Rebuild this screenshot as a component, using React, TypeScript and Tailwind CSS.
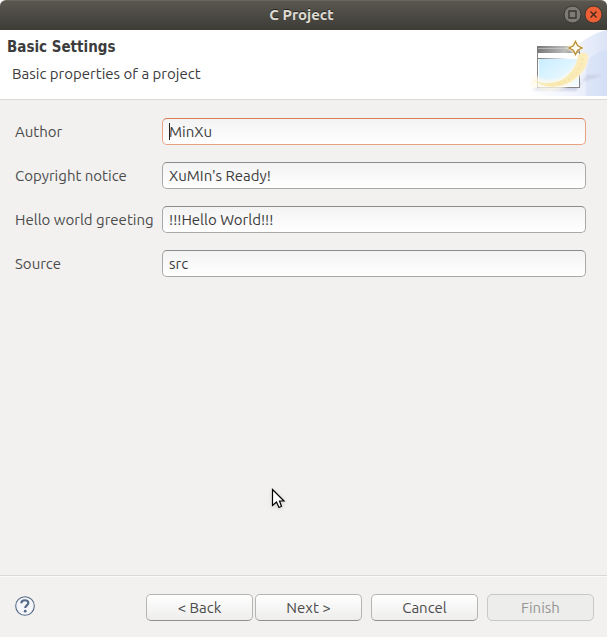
import React from "react";

type FieldProps = { id: string; label: string; value: string; active?: boolean };

function Field({ id, label, value, active = false }: FieldProps) {
  return (
    <>
      <label htmlFor={id} className="whitespace-nowrap">
        {label}
      </label>
      <div className="relative">
        <input
          id={id}
          type="text"
          defaultValue={value}
          className={`block h-[27px] w-full rounded-[5px] border bg-linear-to-b from-[#f3f3f3] to-white px-1.5 text-[#3c3c3c] outline-none ${
            active
              ? "border-[#e9a184] border-t-[#dc7b55]"
              : "border-[#a9a9a7] border-t-[#8b8b89]"
          }`}
        />
        {active && <span className="absolute top-[5px] left-[7px] h-[17px] w-px bg-[#222]" />}
      </div>
    </>
  );
}

function DialogButton({ children, disabled = false }: { children: React.ReactNode; disabled?: boolean }) {
  return (
    <button
      type="button"
      disabled={disabled}
      className={`h-[27px] w-[107px] rounded-[5px] border text-center leading-none ${
        disabled
          ? "border-[#c8c8c6] bg-[#ededec] text-[#979593]"
          : "border-[#b5b5b3] border-b-[#8f8f8d] bg-linear-to-b from-white to-[#eeedec] text-[#4c4c4c]"
      }`}
    >
      {children}
    </button>
  );
}

function WizardBanner() {
  return (
    <svg width="77" height="66" viewBox="0 0 77 66" aria-hidden="true">
      <defs>
        <linearGradient id="fade" x1="0" y1="0" x2="1" y2="0">
          <stop offset="0" stopColor="#fff" />
          <stop offset="0.55" stopColor="#f1f4fc" />
          <stop offset="1" stopColor="#dbe4f7" />
        </linearGradient>
        <linearGradient id="bar" x1="0" y1="0" x2="1" y2="0">
          <stop offset="0" stopColor="#777" />
          <stop offset="0.65" stopColor="#bcbcbc" />
          <stop offset="1" stopColor="#777" />
        </linearGradient>
        <linearGradient id="pane" x1="0" y1="0" x2="1" y2="1">
          <stop offset="0" stopColor="#c9edff" />
          <stop offset="1" stopColor="#f5fcff" />
        </linearGradient>
        <linearGradient id="rim" x1="0" y1="0" x2="1" y2="0">
          <stop offset="0" stopColor="#777" />
          <stop offset="1" stopColor="#fff" />
        </linearGradient>
        <linearGradient id="arc" x1="0" y1="0" x2="1" y2="0">
          <stop offset="0" stopColor="#f9e99c" stopOpacity="0.3" />
          <stop offset="0.35" stopColor="#f9e9ae" />
          <stop offset="1" stopColor="#fbedbd" />
        </linearGradient>
        <filter id="soft" x="-30%" y="-30%" width="160%" height="160%">
          <feGaussianBlur stdDeviation="1.1" />
        </filter>
      </defs>
      <path d="M0 66V56L40 22C50 12 62 3 77 0V66Z" fill="url(#fade)" />
      <path d="M56 31C62 25 70 21 77 20V66H56Z" fill="#c5d3f1" opacity="0.3" />
      <path d="M2 60L13 55H43L73 45L57 45L46 61Z" fill="#c6cbe2" opacity="0.75" filter="url(#soft)" />
      <rect x="7.5" y="16.5" width="42" height="41" fill="#fff" stroke="#858585" />
      <rect x="7" y="16" width="43" height="7" fill="url(#bar)" />
      <path d="M8 18.5H49" stroke="#d4d4d4" opacity="0.6" />
      <rect x="9" y="29" width="40" height="27" fill="url(#pane)" />
      <rect x="8" y="28" width="30" height="1" fill="url(#rim)" />
      <path d="M2 50C14 58 30 57 40 48C49 41 53 34 53 26" fill="none" stroke="#fffaea" strokeWidth="11" opacity="0.75" filter="url(#soft)" />
      <path d="M1 48C10 55 26 55 36 47C43 41 47 34 48 26C49 22 57 21 58 26C58 37 51 45 42 51C29 59 11 59 1 48Z" fill="url(#arc)" />
      <path d="M29 54C42 49 51 41 53 28" fill="none" stroke="#f0dd9f" strokeWidth="1.500" strokeDasharray="2 3" opacity="0.6" />
      <path d="M45.500 9Q47 14 54 18Q47 21 45.500 26Q43 21 36 18Q43 14 45.500 9Z" fill="#fff8d6" filter="url(#soft)" />
      <path d="M45.500 11.500L47.700 15.800L52 18L47.700 20.200L45.500 24.500L43.300 20.200L39 18L43.300 15.800Z" fill="#fffef5" stroke="#b88a32" strokeWidth="1.3" />
    </svg>
  );
}

export default function App() {
  return (
    <div className="bg-white">
      <main className="relative flex min-h-screen flex-col bg-[#f2f1f0] font-['Ubuntu','Noto_Sans',sans-serif] text-[15px] leading-5 text-[#4c4c4c]">
        <div className="bg-white">
          <header className="relative flex h-[30px] items-center justify-center rounded-t-[6px] border-t border-[#66645b] bg-linear-to-b from-[#59574f] to-[#3d3c37]">
            <h1 className="pr-1 pb-0.5 text-[15px] font-bold text-[#dfdbd2] [text-shadow:0_-1px_0_#262521]">C Project</h1>
            <div className="absolute top-1 right-1 flex gap-0.5">
              <button type="button" aria-label="Maximize">
                <svg width="19" height="19" viewBox="0 0 19 19">
                  <circle cx="9.500" cy="9.500" r="8.500" fill="#7d7b73" stroke="#36352f" />
                  <path d="M6 6H13V13H6Z" fill="none" stroke="#36352f" strokeWidth="1.4" />
                </svg>
              </button>
              <button type="button" aria-label="Close">
                <svg width="19" height="19" viewBox="0 0 19 19">
                  <circle cx="9.500" cy="9.500" r="8.500" fill="#ed6035" stroke="#393630" />
                  <path d="M6.500 6.500L12.500 12.500M12.500 6.500L6.500 12.500" stroke="#46291e" strokeWidth="1.4" />
                </svg>
              </button>
            </div>
          </header>
        </div>

        <section className="flex h-[70px] justify-between border-b border-[#d8d8d6] bg-white">
          <div className="pt-[7px] pl-[7px] text-[#3c3c3c]">
            <h2 className="font-['DejaVu_Sans_Condensed','Noto_Sans',sans-serif] text-[15px] font-bold">Basic Settings</h2>
            <p className="pt-[7px] pl-[5px]">Basic properties of a project</p>
          </div>
          <WizardBanner />
        </section>

        <form className="grid grow grid-cols-[137px_1fr] content-start items-center gap-x-2.5 gap-y-[17px] pt-[18px] pr-[21px] pl-[15px]">
          <Field id="author" label="Author" value="MinXu" active />
          <Field id="copyright" label="Copyright notice" value="XuMIn's Ready!" />
          <Field id="greeting" label="Hello world greeting" value="!!!Hello World!!!" />
          <Field id="source" label="Source" value="src" />
        </form>

        <footer className="flex h-[62px] items-start justify-between border-t border-[#d9d8d7] pt-[18px] pr-[13px] pl-[15px] shadow-[inset_0_1px_0_#fafafa]">
          <button type="button" aria-label="Help" className="pt-0.5">
            <svg width="20" height="20" viewBox="0 0 20 20">
              <circle cx="10" cy="10" r="9.300" fill="#f4f6f9" stroke="#566a89" strokeWidth="1.100" />
              <path d="M6.300 7.200C6.500 3.200 13.500 3.300 13.300 7.100C13.200 9.400 10.200 9.400 10.200 12" fill="none" stroke="#566a89" strokeWidth="2.200" />
              <circle cx="10.200" cy="15.200" r="1.400" fill="#566a89" />
            </svg>
          </button>
          <div className="flex gap-[9px]">
            <div className="flex gap-0.5">
              <DialogButton>&lt; Back</DialogButton>
              <DialogButton>Next &gt;</DialogButton>
            </div>
            <DialogButton>Cancel</DialogButton>
            <DialogButton disabled>Finish</DialogButton>
          </div>
        </footer>

        <svg className="pointer-events-none absolute top-[488px] left-[271px] drop-shadow-sm" width="15" height="22" viewBox="0 0 15 22" aria-hidden="true">
          <path d="M1.500 1.500V17.500L5.500 14L8 19.500L10.500 18.300L8.500 13H13Z" fill="#fff" stroke="#000" strokeWidth="1.200" />
        </svg>
      </main>
    </div>
  );
}
